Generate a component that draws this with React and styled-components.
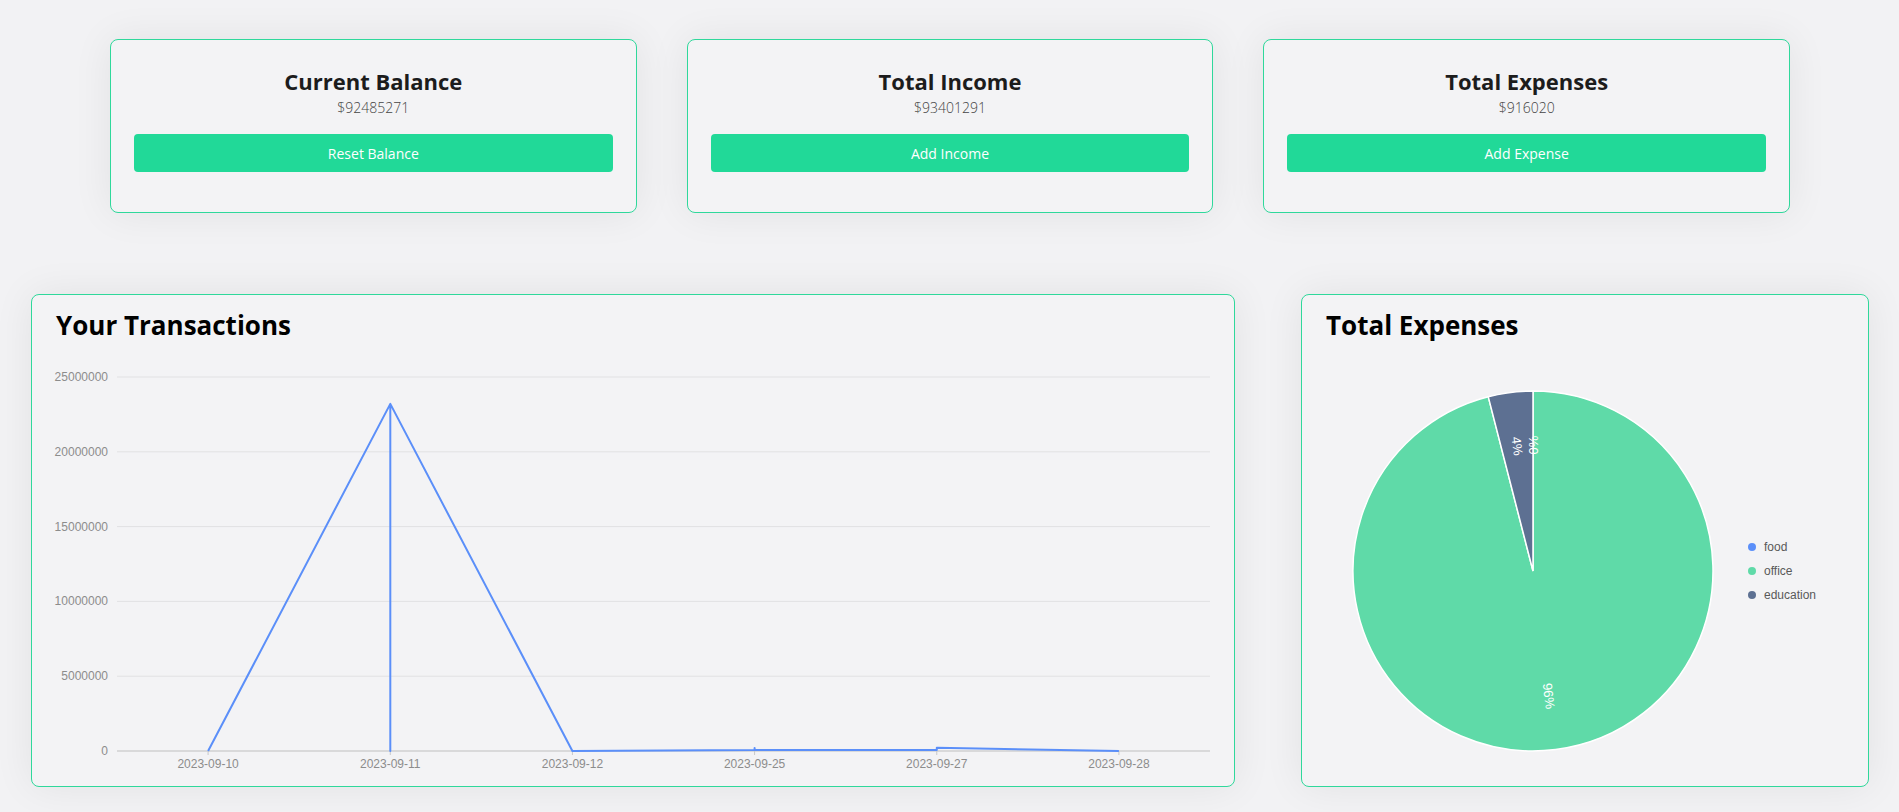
import React from "react";
import styled, { createGlobalStyle } from "styled-components";

const GlobalStyle = createGlobalStyle`
  body {
    margin: 0;
    background: #f2f2f4;
    font-family: "Open Sans", "Liberation Sans", sans-serif;
  }
`;

const Page = styled.div`
  padding-top: 39px;
  min-height: 773px;
`;

const SummaryRow = styled.div`
  display: grid;
  grid-template-columns: repeat(3, 1fr);
  gap: 50px;
  padding: 0 109px 0 110px;
`;

const SummaryCard = styled.div`
  display: flex;
  flex-direction: column;
  align-items: center;
  padding: 26px 23px 40px;
  border: 1px solid #2fd89b;
  border-radius: 8px;
  background: #f3f3f5;
  box-shadow: 0 0 40px rgba(0, 0, 0, 0.07);
`;

const CardTitle = styled.h2`
  margin: 0;
  font-size: 22px;
  line-height: 30px;
  font-weight: 700;
  color: #1c1c1c;
`;

const Amount = styled.p`
  margin: 2px 0 0;
  font-size: 14px;
  line-height: 20px;
  font-weight: 300;
  color: #444444;
`;

const ActionButton = styled.button`
  width: 100%;
  height: 38px;
  margin-top: 16px;
  border: none;
  border-radius: 4px;
  background: #21d998;
  color: #ffffff;
  font-family: inherit;
  font-size: 14px;
  cursor: pointer;
`;

const ChartsRow = styled.div`
  display: grid;
  grid-template-columns: 1fr 568px;
  gap: 66px;
  margin-top: 81px;
  padding: 0 30px 0 31px;
`;

const Panel = styled.div`
  padding-top: 15px;
  border: 1px solid #2fd89b;
  border-radius: 8px;
  background: #f3f3f5;
  box-shadow: 0 0 40px rgba(0, 0, 0, 0.07);
  overflow: hidden;
`;

const PanelTitle = styled.h2`
  margin: 0;
  padding: 0 24px;
  font-size: 26px;
  line-height: 30px;
  font-weight: 700;
  color: #000000;
`;

const ChartSvg = styled.svg`
  display: block;
  font-family: "Liberation Sans", Arial, sans-serif;
`;

const PieArea = styled.div`
  display: flex;
  align-items: center;
  gap: 34px;
  padding: 50px 0 0 50px;
`;

const Legend = styled.ul`
  display: flex;
  flex-direction: column;
  gap: 8px;
  margin: 0;
  padding: 0;
  list-style: none;
`;

const LegendItem = styled.li`
  display: flex;
  align-items: center;
  gap: 8px;
  font-family: "Liberation Sans", Arial, sans-serif;
  font-size: 12px;
  line-height: 16px;
  color: #595959;
`;

const Dot = styled.span`
  width: 8px;
  height: 8px;
  border-radius: 50%;
  background: ${(p) => p.color};
`;

const summary = [
  { title: "Current Balance", amount: 92485271, action: "Reset Balance" },
  { title: "Total Income", amount: 93401291, action: "Add Income" },
  { title: "Total Expenses", amount: 916020, action: "Add Expense" },
];

const dates = [
  "2023-09-10",
  "2023-09-11",
  "2023-09-12",
  "2023-09-25",
  "2023-09-27",
  "2023-09-28",
];

// [date index, amount]
const points = [
  [0, 0],
  [1, 23200000],
  [1, 0],
  [1, 23200000],
  [2, 0],
  [3, 60000],
  [3, 200000],
  [3, 60000],
  [4, 60000],
  [4, 220000],
  [5, 0],
];

const expenses = [
  { name: "food", value: 0, color: "#5B8FF9" },
  { name: "office", value: 879380, color: "#5FDAA8" },
  { name: "education", value: 36640, color: "#5D7092" },
];

function LineChart() {
  const w = 1202;
  const h = 446;
  const left = 85;
  const right = 1178;
  const top = 37;
  const bottom = 411;
  const max = 25000000;
  const band = (right - left) / dates.length;
  const x = (i) => left + band * (i + 0.5);
  const y = (v) => bottom - (v / max) * (bottom - top);
  const ticks = [0, 5000000, 10000000, 15000000, 20000000, 25000000];
  const path = points
    .map(([i, v], n) => `${n ? "L" : "M"}${x(i).toFixed(1)} ${y(v).toFixed(1)}`)
    .join(" ");

  return (
    <ChartSvg width={w} height={h} viewBox={`0 0 ${w} ${h}`}>
      {ticks.map((t) => (
        <g key={t}>
          <line
            x1={left}
            x2={right}
            y1={y(t)}
            y2={y(t)}
            stroke={t === 0 ? "#d0d0d0" : "#e1e1e3"}
            strokeWidth={t === 0 ? 1.5 : 1}
          />
          <text x={left - 9} y={y(t) + 4} textAnchor="end" fontSize="12" fill="#8c8c8c">
            {t}
          </text>
        </g>
      ))}
      {dates.map((d, i) => (
        <g key={d}>
          <line x1={x(i)} x2={x(i)} y1={bottom} y2={bottom + 4} stroke="#c8c8c8" />
          <text x={x(i)} y={bottom + 17} textAnchor="middle" fontSize="12" fill="#8c8c8c">
            {d}
          </text>
        </g>
      ))}
      <path d={path} fill="none" stroke="#5B8FF9" strokeWidth="2" strokeLinejoin="round" />
    </ChartSvg>
  );
}

function PieChart() {
  const size = 362;
  const c = size / 2;
  const r = 180;
  const total = expenses.reduce((s, e) => s + e.value, 0);
  let acc = 0;

  const slices = expenses.map((e) => {
    const a0 = -Math.PI / 2 + (acc / total) * Math.PI * 2;
    acc += e.value;
    const a1 = -Math.PI / 2 + (acc / total) * Math.PI * 2;
    const large = a1 - a0 > Math.PI ? 1 : 0;
    const d = `M${c} ${c} L${c + r * Math.cos(a0)} ${c + r * Math.sin(a0)} A${r} ${r} 0 ${large} 1 ${
      c + r * Math.cos(a1)
    } ${c + r * Math.sin(a1)} Z`;
    const mid = (a0 + a1) / 2;
    let rot = (mid * 180) / Math.PI;
    if (Math.cos(mid) < -0.001) rot += 180;
    return {
      ...e,
      d,
      lx: c + r * 0.7 * Math.cos(mid),
      ly: c + r * 0.7 * Math.sin(mid),
      rot,
      pct: Math.round((e.value / total) * 100),
    };
  });

  return (
    <ChartSvg width={size} height={size} viewBox={`0 0 ${size} ${size}`}>
      {slices.map((s) => (
        <path key={s.name} d={s.d} fill={s.color} stroke="#ffffff" strokeWidth="1.5" />
      ))}
      {slices.map((s) => (
        <text
          key={s.name}
          x={s.lx}
          y={s.ly}
          fill="#ffffff"
          fontSize="13"
          textAnchor="middle"
          dominantBaseline="central"
          transform={`rotate(${s.rot} ${s.lx} ${s.ly})`}
        >
          {s.pct}%
        </text>
      ))}
    </ChartSvg>
  );
}

export default function App() {
  return (
    <>
      <GlobalStyle />
      <Page>
        <SummaryRow>
          {summary.map((s) => (
            <SummaryCard key={s.title}>
              <CardTitle>{s.title}</CardTitle>
              <Amount>${s.amount}</Amount>
              <ActionButton>{s.action}</ActionButton>
            </SummaryCard>
          ))}
        </SummaryRow>

        <ChartsRow>
          <Panel>
            <PanelTitle>Your Transactions</PanelTitle>
            <LineChart />
          </Panel>
          <Panel>
            <PanelTitle>Total Expenses</PanelTitle>
            <PieArea>
              <PieChart />
              <Legend>
                {expenses.map((e) => (
                  <LegendItem key={e.name}>
                    <Dot color={e.color} />
                    {e.name}
                  </LegendItem>
                ))}
              </Legend>
            </PieArea>
          </Panel>
        </ChartsRow>
      </Page>
    </>
  );
}
